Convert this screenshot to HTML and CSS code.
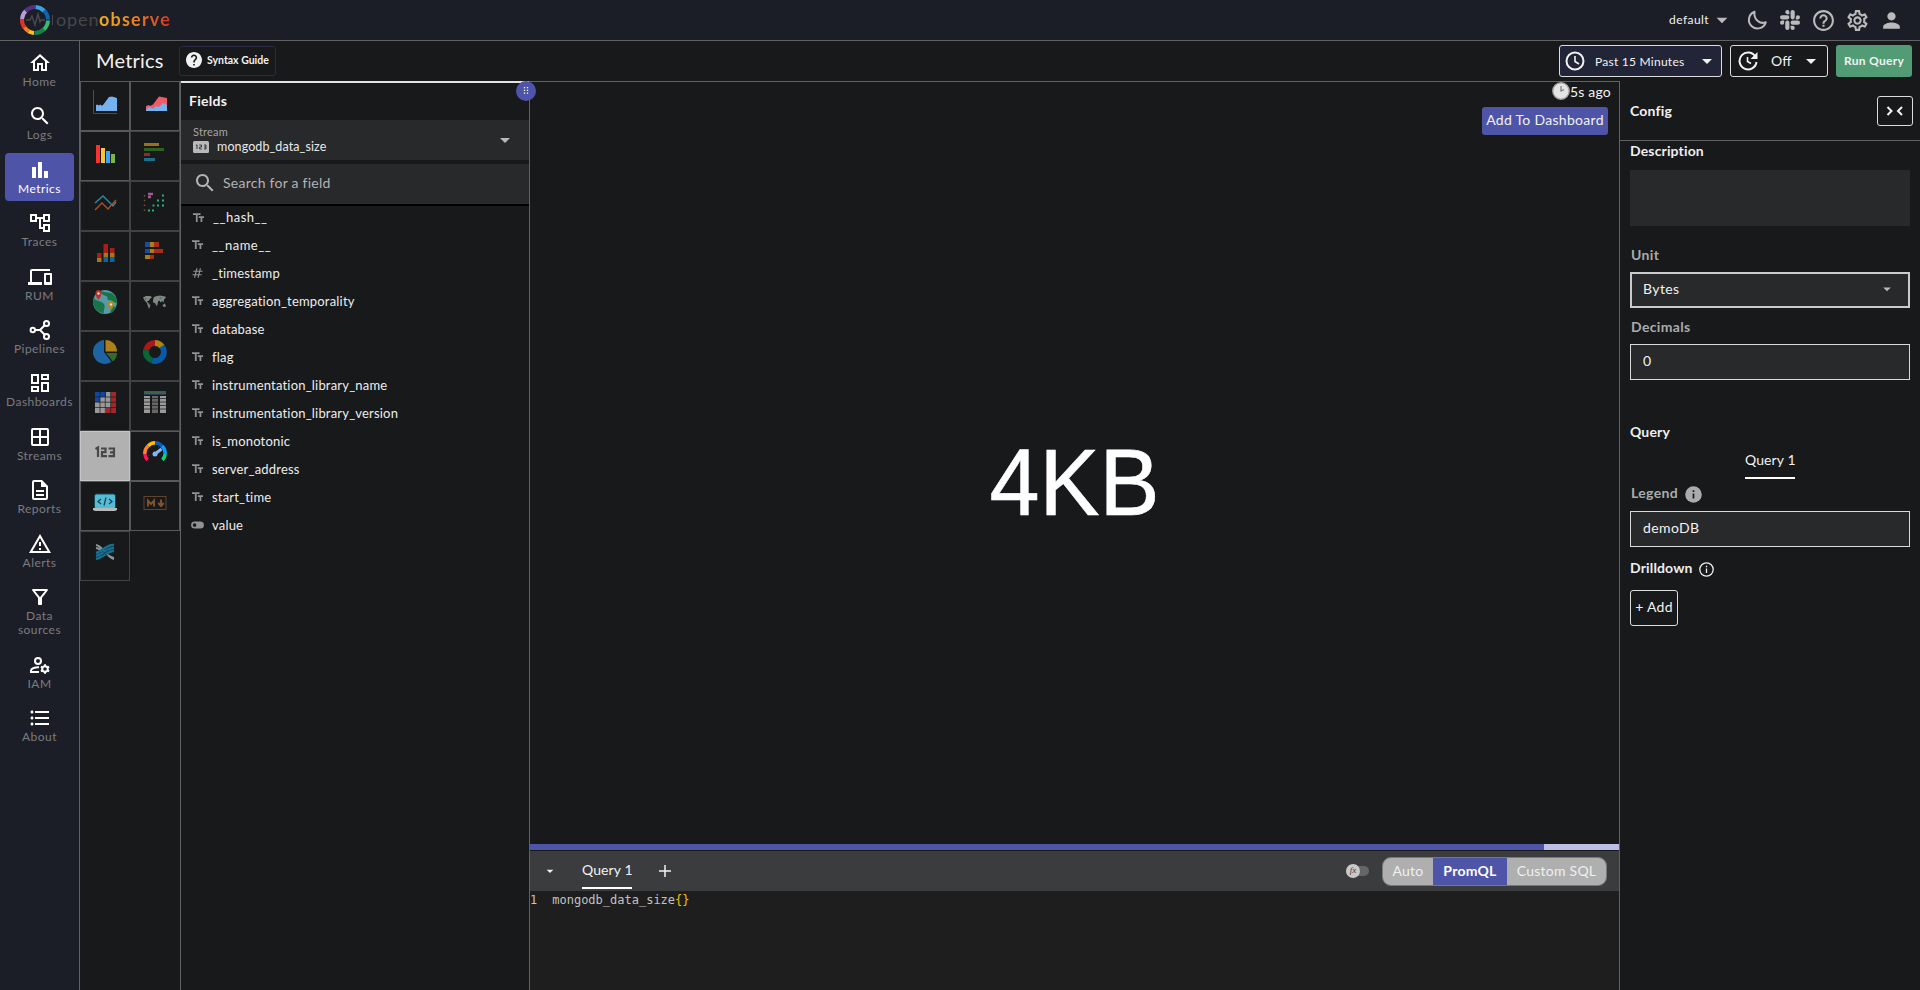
FILE: index.html
```html
<!DOCTYPE html>
<html lang="en">
<head>
<meta charset="utf-8">
<title>OpenObserve - Metrics</title>
<link rel="stylesheet" href="styles.css">
</head>
<body>
<svg class="defs" width="0" height="0">
  <symbol id="search" viewBox="0 0 24 24"><path d="M15.5 14h-.79l-.28-.27C15.41 12.59 16 11.11 16 9.5 16 5.91 13.09 3 9.5 3S3 5.91 3 9.5 5.91 16 9.5 16c1.61 0 3.09-.59 4.23-1.57l.27.28v.79l5 4.99L20.49 19l-4.99-5zm-6 0C7.01 14 5 11.99 5 9.5S7.01 5 9.5 5 14 7.01 14 9.5 11.99 14 9.5 14z"/></symbol>
  <symbol id="drop" viewBox="0 0 24 24"><path d="M7 10l5 5 5-5z"/></symbol>
  <symbol id="tt" viewBox="0 0 24 24"><path d="M2.5 4v3h5v12h3V7h5V4h-13zm19 5h-9v3h3v7h3v-7h3V9z"/></symbol>
  <symbol id="hash" viewBox="0 0 24 24"><path d="M20.500 10L21 8h-4l1-4h-2l-1 4h-4l1-4h-2L9 8H5l-.5 2h4l-1 4h-4L3 16h4l-1 4h2l1-4h4l-1 4h2l1-4h4l.5-2h-4l1-4h4zm-7 4h-4l1-4h4l-1 4z"/></symbol>
  <symbol id="gear" viewBox="0 0 24 24"><path d="M19.43 12.98c.04-.32.07-.64.07-.98 0-.34-.03-.66-.07-.98l2.11-1.65c.19-.15.24-.42.12-.64l-2-3.460c-.09-.16-.26-.25-.44-.25-.06 0-.12.01-.17.03l-2.490 1c-.52-.4-1.08-.73-1.690-.98l-.38-2.650C14.460 2.180 14.250 2 14 2h-4c-.25 0-.46.18-.49.42l-.38 2.650c-.61.25-1.170.59-1.690.98l-2.490-1c-.06-.02-.12-.03-.18-.03-.17 0-.34.09-.43.25l-2 3.460c-.13.22-.07.49.12.64l2.110 1.650c-.04.32-.07.65-.07.98 0 .33.03.66.07.98l-2.110 1.650c-.19.15-.24.42-.12.64l2 3.460c.09.16.26.25.44.25.06 0 .12-.01.17-.03l2.490-1c.52.4 1.080.73 1.690.98l.38 2.650c.03.24.24.42.49.42h4c.25 0 .46-.18.49-.42l.38-2.650c.61-.25 1.170-.59 1.690-.98l2.490 1c.06.02.12.03.18.03.17 0 .34-.09.43-.25l2-3.460c.12-.22.07-.49-.12-.64l-2.110-1.650zm-1.980-1.710c.04.31.05.52.05.73 0 .21-.02.43-.05.73l-.14 1.130.89.7 1.080.84-.7 1.210-1.270-.51-1.040-.42-.9.68c-.43.32-.84.56-1.250.73l-1.060.43-.16 1.130-.2 1.350h-1.400l-.19-1.350-.16-1.130-1.060-.43c-.43-.18-.83-.41-1.230-.71l-.91-.7-1.060.43-1.270.51-.7-1.210 1.080-.84.89-.7-.14-1.130c-.03-.31-.05-.54-.05-.74s.02-.43.05-.73l.14-1.130-.89-.7-1.080-.84.7-1.210 1.270.51 1.040.42.9-.68c.43-.32.84-.56 1.250-.73l1.060-.43.16-1.130.2-1.350h1.390l.19 1.350.16 1.130 1.060.43c.43.18.83.41 1.230.71l.91.7 1.060-.43 1.270-.51.7 1.210-1.070.85-.89.7.14 1.130zM12 8c-2.210 0-4 1.790-4 4s1.790 4 4 4 4-1.790 4-4-1.790-4-4-4zm0 6c-1.100 0-2-.9-2-2s.9-2 2-2 2 .9 2 2-.9 2-2 2z"/></symbol>
</svg>

<header class="topbar">
  <div class="logo">
    <svg class="logo-ring" width="32" height="32" viewBox="0 0 32 32" fill="none" stroke-width="4">
      <path d="M3 15A13 13 0 0 1 6.800 6.800" stroke="#b49fd6"/><path d="M6.500 7.200A13 13 0 0 1 16 3" stroke="#553185"/>
      <path d="M16.500 3A13 13 0 0 1 25.300 7" stroke="#37a4e0"/><path d="M25 6.500A13 13 0 0 1 29 15.500" stroke="#0b65b5"/>
      <path d="M29 16.500A13 13 0 0 1 24.500 25.700" stroke="#3ab878"/><path d="M25 25.300A13 13 0 0 1 15.500 29" stroke="#108548"/>
      <path d="M15 29A13 13 0 0 1 9.500 27.300" stroke="#fbc316"/><path d="M10 27.500A13 13 0 0 1 5.300 23" stroke="#f57b27"/><path d="M5.500 23.500A13 13 0 0 1 3 15" stroke="#dc3528"/>
      <path d="M7 16h4l2-4 3 9 3-11 2 8 1-2h4" stroke="#494b50" stroke-width="1.400"/>
    </svg>
    <span class="logo-bar"></span><span class="logo-open">open</span><span class="logo-observe">observe</span>
  </div>
  <div class="top-actions">
    <span class="org">default</span>
    <svg class="org-drop" width="26" height="26"><use href="#drop"/></svg>
    <svg width="24" height="24" viewBox="0 0 24 24" fill="none" stroke="currentColor" stroke-width="2"><path d="M9.500 3.800A8.600 8.600 0 1 0 20.800 14.200C15.500 16.500 8.500 12 9.500 3.800z" stroke-linejoin="round"/></svg>
    <svg class="slack" width="20" height="20" viewBox="0 0 24 24"><path d="M5 15.200a2.500 2.500 0 1 1-2.500-2.500H5zM6.300 15.200a2.500 2.500 0 0 1 5 0v6.300a2.500 2.500 0 0 1-5 0zM8.800 5a2.500 2.500 0 1 1 2.500-2.500V5zM8.800 6.300a2.500 2.500 0 0 1 0 5H2.500a2.500 2.500 0 0 1 0-5zM19 8.800a2.500 2.500 0 1 1 2.500 2.500H19zM17.700 8.800a2.500 2.500 0 0 1-5 0V2.500a2.500 2.500 0 0 1 5 0zM15.200 19a2.500 2.500 0 1 1-2.500 2.500V19zM15.200 17.700a2.500 2.500 0 0 1 0-5h6.300a2.500 2.500 0 0 1 0 5z"/></svg>
    <svg width="25" height="25" viewBox="0 0 24 24"><path d="M11 18h2v-2h-2v2zm1-16C6.480 2 2 6.480 2 12s4.480 10 10 10 10-4.480 10-10S17.520 2 12 2zm0 18c-4.410 0-8-3.590-8-8s3.590-8 8-8 8 3.590 8 8-3.590 8-8 8zm0-14c-2.210 0-4 1.790-4 4h2c0-1.100.9-2 2-2s2 .9 2 2c0 2-3 1.750-3 5h2c0-2.250 3-2.500 3-5 0-2.210-1.790-4-4-4z"/></svg>
    <svg width="25" height="25"><use href="#gear"/></svg>
    <svg width="25" height="25" viewBox="0 0 24 24"><path d="M12 12c2.210 0 4-1.790 4-4s-1.790-4-4-4-4 1.790-4 4 1.790 4 4 4zm0 2c-2.670 0-8 1.340-8 4v2h16v-2c0-2.660-5.330-4-8-4z"/></svg>
  </div>
</header>

<div class="shell">
<nav class="sidebar">
  <a class="nav-item"><svg viewBox="0 0 24 24"><path d="M12 5.690l5 4.500V18h-2v-6H9v6H7v-7.810l5-4.500M12 3L2 12h3v8h6v-6h2v6h6v-8h3L12 3z"/></svg><span>Home</span></a>
  <a class="nav-item"><svg><use href="#search"/></svg><span>Logs</span></a>
  <a class="nav-item active"><svg viewBox="0 0 24 24"><path d="M4 9h4v11H4zm12 4h4v7h-4zm-6-9h4v16h-4z"/></svg><span>Metrics</span></a>
  <a class="nav-item"><svg viewBox="0 0 24 24"><path d="M22 11V3h-7v3H9V3H2v8h7V8h2v10h4v3h7v-8h-7v3h-2V8h2v3h7zM7 9H4V5h3v4zm10 6h3v4h-3v-4zm0-10h3v4h-3V5z"/></svg><span>Traces</span></a>
  <a class="nav-item"><svg viewBox="0 0 24 24"><path d="M4 6h18V4H4c-1.100 0-2 .9-2 2v11H0v3h14v-3H4V6zm19 2h-6c-.55 0-1 .45-1 1v10c0 .55.45 1 1 1h6c.55 0 1-.45 1-1V9c0-.55-.45-1-1-1zm-1 9h-4v-7h4v7z"/></svg><span>RUM</span></a>
  <a class="nav-item"><svg class="line" viewBox="0 0 24 24"><circle cx="4.800" cy="12" r="2.200"/><circle cx="18.500" cy="5.500" r="2.500"/><circle cx="18.500" cy="18.500" r="2.500"/><path d="M7 12h5l4.700-4.700M12 12l4.700 4.700"/></svg><span>Pipelines</span></a>
  <a class="nav-item"><svg viewBox="0 0 24 24"><path d="M19 5v2h-4V5h4M9 5v6H5V5h4m10 8v6h-4v-6h4M9 17v2H5v-2h4M21 3h-8v6h8V3zM11 3H3v10h8V3zm10 8h-8v10h8V11zm-10 4H3v6h8v-6z"/></svg><span>Dashboards</span></a>
  <a class="nav-item"><svg class="line" viewBox="0 0 24 24"><rect x="4" y="4" width="16" height="16" rx="1"/><path d="M12 4v16M4 12h16"/></svg><span>Streams</span></a>
  <a class="nav-item"><svg viewBox="0 0 24 24"><path d="M8 16h8v2H8zm0-4h8v2H8zm6-10H6c-1.100 0-2 .9-2 2v16c0 1.100.89 2 1.990 2H18c1.100 0 2-.9 2-2V8l-6-6zm4 18H6V4h7v5h5v11z"/></svg><span>Reports</span></a>
  <a class="nav-item"><svg viewBox="0 0 24 24"><path d="M12 5.990L19.530 19H4.470L12 5.990M12 2L1 21h22L12 2zm1 14h-2v2h2v-2zm0-6h-2v4h2v-4z"/></svg><span>Alerts</span></a>
  <a class="nav-item"><svg viewBox="0 0 24 24"><path d="M7 6h10l-5.010 6.300L7 6zm-2.750-.39C6.270 8.200 10 13 10 13v6c0 .55.45 1 1 1h2c.55 0 1-.45 1-1v-6s3.720-4.800 5.740-7.390C20.250 4.950 19.780 4 18.950 4H5.040c-.83 0-1.280.95-.79 1.610z"/></svg><span>Data<br>sources</span></a>
  <a class="nav-item iam"><svg class="line" viewBox="0 0 24 24"><circle cx="10" cy="8" r="3"/><path d="M11 14.200C7.500 13.800 3 15.500 3 17.500V19h8"/><circle cx="17" cy="16" r="2.800"/><path d="M17 11.200v2M17 18.800v2M12.900 13.600l1.700 1M19.400 17.400l1.700 1M12.900 18.400l1.700-1M19.400 14.600l1.700-1"/></svg><span>IAM</span></a>
  <a class="nav-item"><svg viewBox="0 0 24 24"><path d="M4 10.500c-.83 0-1.500.67-1.500 1.500s.67 1.500 1.500 1.500 1.500-.67 1.500-1.500-.67-1.500-1.500-1.500zm0-6c-.83 0-1.500.67-1.500 1.500S3.170 7.500 4 7.500 5.500 6.830 5.500 6 4.830 4.500 4 4.500zm0 12c-.83 0-1.500.68-1.500 1.500s.68 1.500 1.500 1.500 1.500-.68 1.500-1.500-.67-1.500-1.500-1.500zM7 19h14v-2H7v2zm0-6h14v-2H7v2zm0-8v2h14V5H7z"/></svg><span>About</span></a>
</nav>

<main class="page">
  <div class="page-bar">
    <h1>Metrics</h1>
    <button class="syntax"><svg width="16" height="16" viewBox="2 2 20 20"><path d="M12 2C6.480 2 2 6.480 2 12s4.480 10 10 10 10-4.480 10-10S17.520 2 12 2zm1 17h-2v-2h2v2zm2.070-7.750l-.9.920C13.450 12.900 13 13.500 13 15h-2v-.5c0-1.100.45-2.100 1.170-2.830l1.240-1.260c.37-.36.59-.86.59-1.410 0-1.100-.9-2-2-2s-2 .9-2 2H8c0-2.210 1.790-4 4-4s4 1.790 4 4c0 .88-.36 1.680-.93 2.250z"/></svg><span>Syntax Guide</span></button>
    <div class="bar-right">
      <button class="time"><svg class="line" width="20" height="20" viewBox="2 2 20 20"><circle cx="12" cy="12" r="8.500"/><path d="M12 7v5.500l4 2.500" stroke-width="1.600"/></svg><span>Past 15 Minutes</span><svg class="caret" width="24" height="24"><use href="#drop"/></svg></button>
      <button class="refresh"><svg class="line" width="20" height="20" viewBox="2 2 20 20"><path d="M19.500 7.800A8.500 8.500 0 1 0 20.500 13"/><path d="M21.500 3v7h-7z" fill="currentColor" stroke="none"/><path d="M11.500 8v4.500l3.500 2" stroke-width="1.600"/></svg><span>Off</span><svg class="caret" width="24" height="24"><use href="#drop"/></svg></button>
      <button class="run">Run Query</button>
    </div>
  </div>

  <div class="workspace">
    <section class="picker">
      <div class="cells">
        <div class="cell on"><svg viewBox="0 0 24 24"><path d="M.5 0v23.500H24" fill="none" stroke="#3c4f63"/><path d="M3 15l1.500-.5 1 1 2-1 1 1.200 1.500-.8L16 7l3-.5 5 1.500v13H3z" fill="#76b2f0"/></svg></div>
        <div class="cell on"><svg viewBox="0 0 24 24"><path d="M3 16l3-1 1 1 3-1.500L16 6.500l8 1.500V21H3z" fill="#f05b67"/><path d="M3 19.500l3-2.500 4 1.500 3-2.500 3 1 4-4 4 2v6H3z" fill="#76b2f0"/></svg></div>
        <div class="cell on"><svg viewBox="0 0 24 24"><path d="M3 5h4v18H3z" fill="#fb3030"/><path d="M8 8h4v15H8z" fill="#fcc236"/><path d="M13 11h4v12h-4z" fill="#2daafb"/><path d="M18 14h4v9h-4z" fill="#7db648"/></svg></div>
        <div class="cell"><svg viewBox="0 0 24 24"><path d="M1 3h15v3H1z" fill="#99701c"/><path d="M1 8h20v3H1z" fill="#2d611d"/><path d="M1 13h6v3H1z" fill="#912a28"/><path d="M1 18h11v3H1z" fill="#18708f"/></svg></div>
        <div class="cell"><svg viewBox="0 0 24 24" fill="none" stroke-width="1.400"><path d="M2 13l8-7 10 10 3-4" stroke="#2989a7"/><path d="M2 20l7-7 6 6 8-9" stroke="#ae4f23"/></svg></div>
        <div class="cell"><svg viewBox="0 0 24 24" fill="none" stroke-width="2"><path d="M1.500 5v18" stroke="#6e5b30" stroke-dasharray="1.500 3.300" stroke-width="1.400"/><path d="M5 4h5M5 7h3" stroke="#9a5e91" stroke-width="2.500"/><path d="M5 20.500h2m2 0h2M9.500 15.500h2m2.500 0h2m3 0h2M14 10.500h2m3 0h2M19 5.500h2" stroke="#26b17d"/></svg></div>
        <div class="cell"><svg viewBox="0 0 24 24"><path d="M4 13h4.500v5H4zM10.500 4H15v9h-4.500zM17 8h4.500v5H17z" fill="#a81d14"/><path d="M4 18h4.500v4H4zM10.500 13H15v4h-4.500zM17 13h4.500v4H17z" fill="#a87613"/><path d="M10.500 17H15v5h-4.500zM17 17h4.500v5H17z" fill="#0867a8"/></svg></div>
        <div class="cell"><svg viewBox="0 0 24 24"><path d="M2 2h5v5H2zM2 9h5v4H2z" fill="#194ba1"/><path d="M7 2h4v5H7zM7 9h4v4H7zM2 15h5v4H2z" fill="#a98016"/><path d="M11 2h5v5h-5zM11 9h9v4h-9zM7 15h4v4H7z" fill="#a82c16"/></svg></div>
        <div class="cell"><svg viewBox="0 0 24 24"><circle cx="12" cy="12" r="12" fill="#5b98a8"/><path d="M1 8c2 4 7 2 10 6 2 3-1 5 0 9C4 23 0 17 0 12zM8 1c4 2 10 1 12 3 5 5 4 8 4 9-4 0-4-3-8-3-3 0 0-3-3-4C10 5 8 4 8 1zM20 16l3 1c-1 3-3 5-5 6-1-3 0-4 2-7z" fill="#187548"/><path d="M5.500 10C1 4 2 0 5.500 0S10 4 5.500 10z" fill="#b73326"/><path d="M18 20c-5-6-3-9 0-9s5 3 0 9z" fill="#b28a13"/><circle cx="5.500" cy="3.500" r="1.200" fill="#ddd"/><circle cx="18" cy="14.500" r="1.200" fill="#ddd"/></svg></div>
        <div class="cell"><svg viewBox="0 0 24 24" fill="#808884"><path d="M0 7.500l3-1.500h4l2 1-2 2-1.500 2L4 11l2 3 1.500 1-1.500 4-1.500-4-.5-2-2-2zM10 10l1-3 3-1 3-.5 5 1 1 1-2 2-.5 3-1.500-1.500-1.500 1.500-1-2-1.500 1-.5 3-1 1.500-1.500-3-2-.5zM19.500 15l2.500-1.500 1 3-2.500.5z"/><path d="M1.500 8l2 .5-1 1.500zM5.500 13l1.500 1-1 2zM16 8l3-1-1 2z" fill="#28795f"/></svg></div>
        <div class="cell"><svg viewBox="0 0 24 24"><path d="M11 12V0a12 12 0 1 0 7.500 22z" fill="#1c64a3"/><path d="M12.500 0A11.500 11.500 0 0 1 24 11.500H12.500z" fill="#ad8019"/><path d="M13 13h11c0 4-2 7-4 8.500z" fill="#326c2d"/></svg></div>
        <div class="cell"><svg viewBox="0 0 24 24" fill="none" stroke-width="6"><path d="M3.200 10A9 9 0 0 1 12 3" stroke="#ad1719"/><path d="M12 3a9 9 0 0 1 7 3.500" stroke="#ae8313"/><path d="M19 6.500A9 9 0 0 1 9 20.500" stroke="#075aa7"/><path d="M9 20.500A9 9 0 0 1 3.200 10" stroke="#0a6436"/></svg></div>
        <div class="cell"><svg viewBox="0 0 24 24"><path d="M2 2h21v21H2z" fill="#999"/><path d="M2 2h11v5H7v5H2z" fill="#1146a5"/><path d="M18 2h5v21H13v-5h5z" fill="#a62529"/><path d="M2 7h21M2 12.200h21M2 17.500h21M7 2v21M12.300 2v21M17.600 2v21" stroke="#1b1b1d" stroke-width=".7"/></svg></div>
        <div class="cell"><svg viewBox="0 0 24 24"><path d="M1 1h22v3H1z" fill="#356350"/><path d="M1 4h22v1H1z" fill="#303550"/><path d="M1 6h6v17H1zM17 6h6v17h-6z" fill="#999"/><path d="M9 6h6v17H9z" fill="#666"/><path d="M1 8.500h22M1 12h22M1 15.500h22M1 19h22" stroke="#19191b" stroke-width=".7"/></svg></div>
        <div class="cell selected"><svg viewBox="0 0 24 24" fill="none" stroke="#484848" stroke-width="2.200"><path d="M2.500 9L5 7.500v9.500M8 8.500h4.500v3.700H9v4h5M15.500 8.500H21v7.700h-5.500M17 12.300h4"/></svg></div>
        <div class="cell on"><svg viewBox="0 0 24 24" fill="none" stroke-width="3.400"><path d="M4.500 20A10.300 10.300 0 0 1 1.800 14" stroke="#ff1458"/><path d="M1.800 14A10.300 10.300 0 0 1 5 6" stroke="#ff822e"/><path d="M5 6a10.300 10.300 0 0 1 7-3.200" stroke="#ffbc00"/><path d="M12 2.800A10.300 10.300 0 0 1 19 6" stroke="#075bc0"/><path d="M19 6a10.300 10.300 0 0 1 3.200 8" stroke="#0c9dff"/><path d="M22.200 14a10.300 10.300 0 0 1-2.700 6" stroke="#00dc81"/><path d="M18.500 9l-6.500 5" stroke="#86b3f5" stroke-width="3"/><circle cx="12" cy="14" r="2.500" fill="#86b3f5" stroke="none"/><path d="M6 16A6.500 6.500 0 0 1 17 9" stroke="#0b4a8c" stroke-width="1" stroke-dasharray="1.300 3"/></svg></div>
        <div class="cell on"><svg viewBox="0 0 24 24"><rect x="1.500" y="4" width="21" height="15" rx="2" fill="#55bcd7" stroke="#154a56"/><path d="M8 9l-3 2.500L8 14M16 9l3 2.500-3 2.500M13 7.500l-2 8" fill="none" stroke="#143d47" stroke-width="1.200"/><path d="M0 18h24v2l-2 1H2l-2-1z" fill="#b7b8b8"/></svg></div>
        <div class="cell on"><svg viewBox="0 0 24 24" fill="none"><rect x="1" y="6.500" width="22" height="13" stroke="#5f432b"/><path d="M5 16.500V10.500l3 3.500 3-3.500v6M18 9.500v6M15.300 13L18 16l2.700-3" stroke="#80552d" stroke-width="1.900"/></svg></div>
        <div class="cell"><svg viewBox="0 0 24 24" fill="none" stroke-width="2"><path d="M3 5c7 1 11 13 18 14M3 8c7 1 11 9 18 10" stroke="#8c969d" stroke-width="1.800"/><path d="M3 13C9 12 14 4 21 5M3 16c6-1 11-8 18-8M3 19c6-1 11-8 18-8" stroke="#146f91" stroke-width="2.600"/><path d="M8 16l8-6M9 11l6 5" stroke="#163443" stroke-width=".7"/></svg></div>
      </div>
    </section>

    <section class="fields">
      <h2>Fields</h2>
      <div class="stream"><div><label>Stream</label><div class="stream-val"><svg width="16" height="12" viewBox="0 0 16 12"><rect width="16" height="12" rx="1.500"/><path d="M3 4.500l1-.7V8M6.300 4h2.200v2H6.700v2h2M11 4h2v4h-2m0-2h2" fill="none" stroke="#28292b" stroke-width=".9"/></svg><span>mongodb_data_size</span></div></div><svg width="24" height="24"><use href="#drop"/></svg></div>
      <div class="field-search"><svg width="24" height="24"><use href="#search"/></svg><span>Search for a field</span></div>
      <ul>
        <li><svg><use href="#tt"/></svg>__hash__</li>
        <li><svg><use href="#tt"/></svg>__name__</li>
        <li><svg><use href="#hash"/></svg>_timestamp</li>
        <li><svg><use href="#tt"/></svg>aggregation_temporality</li>
        <li><svg><use href="#tt"/></svg>database</li>
        <li><svg><use href="#tt"/></svg>flag</li>
        <li><svg><use href="#tt"/></svg>instrumentation_library_name</li>
        <li><svg><use href="#tt"/></svg>instrumentation_library_version</li>
        <li><svg><use href="#tt"/></svg>is_monotonic</li>
        <li><svg><use href="#tt"/></svg>server_address</li>
        <li><svg><use href="#tt"/></svg>start_time</li>
        <li><svg viewBox="0 0 24 24"><path fill-rule="evenodd" d="M7 6h10a6 6 0 0 1 0 12H7A6 6 0 0 1 7 6zM7 9a3 3 0 1 0 .01 0z"/></svg>value</li>
      </ul>
      <div class="handle"><svg width="8" height="10" viewBox="0 0 8 10" stroke="#fff" stroke-width="1.300" stroke-dasharray="1.300 1.400" fill="none"><path d="M2.500 1v7M5.500 1v7"/></svg></div>
    </section>

    <section class="center">
      <div class="chart">
        <div class="ago"><svg width="18" height="18" viewBox="0 0 18 18"><circle cx="9" cy="9" r="8.200" fill="#e4e4e4" stroke="#a4a4a4" stroke-width="1.400"/><path d="M9 4v5l3-1.500" fill="none" stroke="#777" stroke-width="1.200"/></svg><span>5s ago</span></div>
        <button class="add-dash">Add To Dashboard</button>
        <div class="metric"><span>4KB</span></div>
      </div>
      <div class="progress"><span></span></div>
      <div class="query-bar">
        <svg class="qcaret" width="16" height="16"><use href="#drop"/></svg>
        <span class="qtab">Query 1</span>
        <svg class="qplus" width="12" height="12" viewBox="0 0 12 12"><path d="M6 0v12M0 6h12" stroke="currentColor" stroke-width="1.500"/></svg>
        <span class="fx"><i>fx</i></span>
        <div class="modes"><span>Auto</span><span class="mode-on">PromQL</span><span>Custom SQL</span></div>
      </div>
      <div class="editor"><span class="ln">1</span><code>mongodb_data_size<b>{}</b></code></div>
    </section>

    <section class="config">
      <div class="config-head"><h2>Config</h2><button><svg width="18" height="10" viewBox="0 0 18 10" fill="none" stroke="currentColor" stroke-width="2"><path d="M1.500 1l4 4-4 4M16 1l-4 4 4 4"/></svg></button></div>
      <div class="config-body">
        <label class="bright">Description</label>
        <div class="area"></div>
        <label class="unit">Unit</label>
        <div class="input select"><span>Bytes</span><svg width="18" height="18"><use href="#drop"/></svg></div>
        <label class="dec">Decimals</label>
        <div class="input">0</div>
        <label class="bright query">Query</label>
        <div class="tabs"><span>Query 1</span></div>
        <label class="legend">Legend<svg width="17" height="17" viewBox="0 0 17 17"><circle cx="8.500" cy="8.500" r="8.300"/><path d="M8.500 7.500v5M8.500 4.200v1.700" stroke="#18191b" stroke-width="1.700"/></svg></label>
        <div class="input">demoDB</div>
        <label class="bright drill">Drilldown<svg width="15" height="15" viewBox="0 0 15 15"><circle cx="7.500" cy="7.500" r="6.700" fill="none" stroke="currentColor" stroke-width="1.300"/><path d="M7.500 6.500v4.500M7.500 3.800v1.500" stroke="currentColor" stroke-width="1.300"/></svg></label>
        <button class="add">+ Add</button>
      </div>
    </section>
  </div>
</main>
</div>
</body>
</html>
```
FILE: styles.css
```css
* { box-sizing: border-box; }
body { margin: 0; width: 1920px; height: 990px; overflow: hidden; display: flex; flex-direction: column; background: #18191b; color: #f2f2f2; font-family: Lato, "Open Sans", sans-serif; font-size: 14px; }
h1, h2, ul { margin: 0; padding: 0; font-weight: 400; }
button { font: inherit; color: inherit; background: none; border: 1px solid #dcdcdc; border-radius: 3px; padding: 0; display: flex; align-items: center; white-space: nowrap; text-align: left; }
svg { flex: none; }
svg:not([fill]) { fill: currentColor; }
.defs { display: none; }
svg.line:not([fill]) { fill: none; stroke: currentColor; stroke-width: 2; }

.topbar { height: 41px; flex: none; border-bottom: 1px solid #606163; background: #1b1e26; display: flex; justify-content: space-between; padding-left: 19px; }
.logo { display: flex; align-items: center; font-size: 18px; line-height: 36px; }
.logo-bar { width: 1px; height: 10px; background: #45474c; margin: 0 3px 0 1px; }
.logo-open, .logo-observe { padding-bottom: 2px; }
.logo-open { color: #45474c; letter-spacing: .9px; width: 43px; }
.logo-observe { font-weight: 700; letter-spacing: 1.2px; background: linear-gradient(90deg, #f3ae1a, #ed8124 50%, #cc3528); -webkit-background-clip: text; background-clip: text; color: transparent; }
.top-actions { display: flex; align-items: center; color: #b9babb; padding-right: 16px; }
.org { color: #f2f2f2; font-size: 12px; letter-spacing: .45px; width: 40px; padding-bottom: 1px; }
.org-drop { margin-right: 10px; height: 28px; }
.top-actions svg:not(.org-drop) { margin-left: 9px; }
.top-actions .slack { margin-right: 2px; }
.top-actions .org-drop + svg { margin-left: 0 !important; margin-right: 2px; }

.shell { flex: 1; display: flex; min-height: 0; }
.sidebar { width: 80px; border-right: 1px solid #606163; background: #1b1e26; padding: 5px; display: flex; flex-direction: column; gap: 5.4px; }
.nav-item { display: flex; flex-direction: column; align-items: center; padding: 5px 0; color: #fff; border-radius: 4px; }
.nav-item svg { width: 24px; height: 24px; }
.nav-item span { color: #7b7c80; font-size: 12px; line-height: 14px; letter-spacing: .45px; text-align: center; white-space: nowrap; }
.nav-item.active { background: #4e55a8; }
.nav-item.active span { color: #fff; }
.nav-item.iam { padding: 6px 0 4px; }

.page { flex: 1; display: flex; flex-direction: column; min-width: 0; }
.page-bar { height: 40px; display: flex; align-items: center; padding: 0 8px 0 16px; }
h1 { font-size: 20px; letter-spacing: .2px; width: 83px; padding-bottom: 2px; }
.syntax { width: 97px; height: 30px; border-color: #292b48; padding: 0 0 2px 6px; gap: 5px; font-size: 10.5px; font-weight: 700; }
.bar-right { margin-left: auto; display: flex; gap: 8px; }
.bar-right button { height: 32px; }
.time { width: 163px; background: #222438; padding-left: 5px; font-size: 12px; }
.time span { margin-left: 10px; width: 100px; letter-spacing: .25px; }
.refresh { width: 98px; padding-left: 7px; }
.refresh span { margin-left: 13px; width: 27px; padding-bottom: 1px; }
.refresh .caret { margin-left: 1px; }
.bar-right .run { width: 76px; justify-content: center; border: 0; background: #519b75; font-weight: 700; font-size: 12px; letter-spacing: .3px; padding-bottom: 1px; }

.workspace { flex: 1; display: flex; min-height: 0; }
.picker { width: 101px; border-right: 1px solid #606163; }
.cells { display: grid; grid-template-columns: 50px 50px; grid-auto-rows: 50px; }
.cell { border: 1px solid #414244; display: flex; justify-content: center; padding-top: 8px; }
.cell svg { width: 24px; height: 24px; }
.cell.on { border-color: #59595c; }
.cell.selected { background: #b1b1b1; border-color: #c6c6c6; }

.fields { width: 349px; border-right: 1px solid #606163; position: relative; }
.fields h2 { height: 39px; line-height: 36px; border-top: 2px solid #e3e3e6; font-weight: 700; font-size: 14px; padding-left: 8px; letter-spacing: .3px; }
.stream { height: 40px; background: #28292b; display: flex; align-items: center; justify-content: space-between; padding: 0 12px; color: #b9b9ba; }
.stream label { display: block; height: 13px; font-size: 11px; font-weight: 400; color: #a5a5a6; line-height: 12px; letter-spacing: .2px; }
.stream-val { display: flex; align-items: center; gap: 8px; font-size: 12.5px; line-height: 16px; letter-spacing: .1px; }
.stream-val span { color: #e8e8e8; }
.field-search { height: 42px; margin-top: 4px; background: #28292b; border-bottom: 2px solid #000; display: flex; align-items: center; padding: 0 0 2px 12px; gap: 6px; color: #b3b3b4; font-size: 14px; letter-spacing: .25px; }
.field-search span { padding-bottom: 1px; }
.fields ul { list-style: none; }
.fields li { height: 28px; display: flex; align-items: center; gap: 7px; padding: 0 0 3px 9px; font-size: 13px; letter-spacing: .19px; color: #ededed; }
.fields li:first-child { height: 26px; padding: 0 0 4px 10px; }
.fields li:nth-child(-n+2) { letter-spacing: .5px; }
.fields li svg { width: 15px; height: 14px; color: #929294; margin-top: 1px; }
.handle { position: absolute; right: -7px; top: 0; width: 20px; height: 20px; border-radius: 50%; background: #4e55a8; display: flex; align-items: center; justify-content: center; z-index: 2; }

.center { width: 1090px; border-right: 1px solid #606163; display: flex; flex-direction: column; }
.chart { height: 763px; border-top: 1px solid #606163; display: flex; flex-direction: column; align-items: flex-end; }
.ago { display: flex; align-items: center; height: 18px; padding-right: 8px; margin-bottom: 7px; }
.ago span { letter-spacing: .2px; padding-top: 1px; }
.add-dash { width: 126px; height: 28px; border: 0; background: #4e55a8; margin-right: 11px; padding-bottom: 3px; justify-content: center; letter-spacing: .3px; }
.metric { align-self: stretch; display: flex; justify-content: center; padding-top: 297px; font: 90px/103px "Liberation Sans", Arial, sans-serif; color: #fff; }
.metric span { transform: scaleY(1.045); -webkit-text-stroke: .6px #fff; }
.progress { height: 6px; background: #4e55a8; display: flex; justify-content: flex-end; flex: none; }
.progress span { width: 75px; background: #bcbfe3; }
.query-bar { height: 41px; flex: none; border-top: 1px solid #18191b; background: #3b3c3e; display: flex; align-items: center; padding: 0 12px; }
.qtab { margin-left: 24px; height: 38px; line-height: 38px; border-bottom: 2px solid #fff; width: 50px; letter-spacing: .1px; align-self: flex-start; white-space: nowrap; }
.qplus { margin-left: 27px; }
.fx { margin-left: auto; margin-right: 13px; width: 23px; height: 10px; border-radius: 5px; background: #666; display: flex; align-items: center; }
.fx i { width: 14px; height: 14px; flex: none; border-radius: 50%; background: #c9c9c9; color: #3b3c3e; font: italic 9px/13px "Liberation Serif", serif; text-align: center; }
.modes { display: flex; width: 225px; height: 29px; border: 1px solid #77787a; border-radius: 9px; overflow: hidden; background: #afafaf; line-height: 26px; text-align: center; letter-spacing: .25px; color: #f0f0f0; }
.modes span:first-child { width: 50px; }
.modes span:last-child { flex: 1; }
.modes .mode-on { width: 74px; background: #4e55a8; font-weight: 700; color: #fff; }
.editor { flex: 1; background: #1e1e1e; color: #c2c2c2; font: 12px/18px "DejaVu Sans Mono", monospace; }
.editor code { font: inherit; margin-left: 15px; }
.editor b { font-weight: 400; color: #eec40a; }

.config { flex: 1; }
.config-head { height: 60px; border-bottom: 1px solid #606163; display: flex; align-items: center; justify-content: space-between; padding: 0 7px 0 10px; }
.config-head h2 { font-size: 14px; font-weight: 700; letter-spacing: .2px; }
.config-head button { width: 36px; height: 30px; justify-content: center; }
.config-body { padding: 0 10px; display: flex; flex-direction: column; }
label { font-weight: 700; letter-spacing: .35px; color: #aaabab; line-height: 20px; height: 20px; display: flex; align-items: center; }
.config-body .bright { color: #eee; letter-spacing: .15px; }
.area { height: 56px; background: #28292b; margin: 9px 0 19px; }
.unit, .dec, .legend { padding-left: 1px; }
.unit { margin-bottom: 7px; }
.input { height: 36px; border: 1px solid #dadada; background: #28292b; padding: 0 12px 3px; display: flex; align-items: center; justify-content: space-between; letter-spacing: .4px; }
.select { border: 2px solid #cbcbcb; padding-left: 11px; }
.select svg { color: #b9b9ba; }
.dec { margin: 9px 0 7px; }
.query { margin-top: 42px; }
.tabs { display: flex; justify-content: center; height: 37px; }
.tabs span { height: 37px; padding-top: 9px; border-bottom: 2px solid #fff; width: 50px; white-space: nowrap; letter-spacing: .1px; }
.legend { margin: 4px 0 8px; }
.legend svg { margin: 3px 0 0 7px; }
.drill { margin: 11px 0 12px; }
.drill svg { margin: 2px 0 0 6px; }
.add { width: 48px; height: 36px; justify-content: center; letter-spacing: .3px; padding-bottom: 3px; }
```
